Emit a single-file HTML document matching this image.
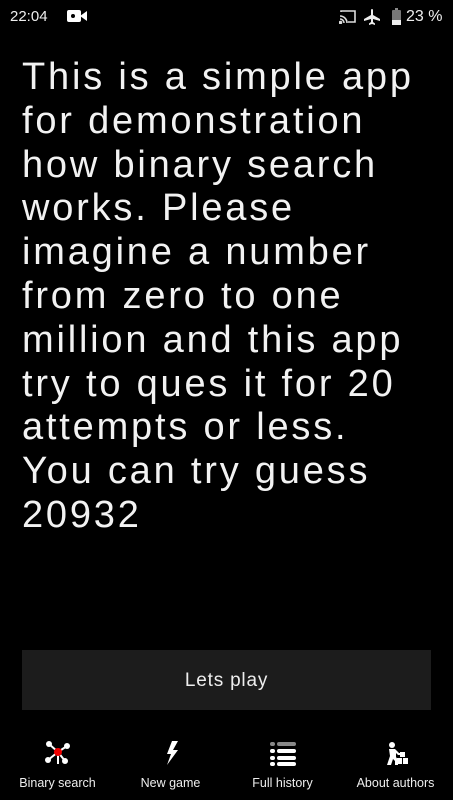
<!DOCTYPE html>
<html><head><meta charset="utf-8"><style>
body{margin:0;width:453px;height:800px;background:#000;color:#fff;font-family:"Liberation Sans",sans-serif;position:relative;overflow:hidden}
.sb{position:absolute;top:0;left:0;right:0;height:34px;font-size:15px;color:#eee}
.main{position:absolute;left:22px;top:56px;width:440px;font-size:38px;line-height:43.8px;color:#f2f2f2;letter-spacing:2.8px;white-space:nowrap}
.btn{position:absolute;left:22px;top:650px;width:409px;height:60px;background:#1c1c1c;color:#eee;font-size:19px;text-align:center;line-height:62px;letter-spacing:0.8px}
.nav{position:absolute;top:740px;left:0;width:453px;height:60px}
.it{position:absolute;top:0;width:113px;text-align:center}
.it svg{display:block;margin:0 auto}
.lb{position:absolute;top:36px;left:0;right:0;font-size:12.5px;color:#eee;text-align:center}
</style></head><body>
<div class="sb">
<span style="position:absolute;left:10px;top:8px">22:04</span>
<svg style="position:absolute;left:67px;top:10px" width="20" height="12"><rect x="0" y="0" width="14" height="12" rx="2" fill="#fff"/><polygon points="13,6 20,1 20,11" fill="#fff"/><circle cx="6" cy="6" r="2" fill="#000"/></svg>
<svg style="position:absolute;left:339px;top:9px" width="18" height="15" fill="none" stroke="#ddd" stroke-width="1.6"><path d="M2 3V2h14v11H9"/><path d="M1 7a7 7 0 0 1 7 7M1 10a4 4 0 0 1 4 4"/><circle cx="1.5" cy="13.5" r="1" fill="#ddd"/></svg>
<svg style="position:absolute;left:364px;top:8px" width="17" height="17" fill="#eee"><path d="M8 1c1 0 1 1 1 2v4l7 4v2l-7-2v3l2 1.5V17l-3-1-3 1v-1.5L7 14v-3l-7 2v-2l7-4V3c0-1 0-2 1-2z"/></svg>
<svg style="position:absolute;left:392px;top:8px" width="9" height="17"><rect x="3" y="0" width="3" height="2" fill="#888"/><rect x="0" y="2" width="9" height="15" rx="1" fill="#777"/><rect x="0" y="12" width="9" height="5" fill="#eee"/></svg>
<span style="position:absolute;left:406px;top:8px;font-size:16px">23 %</span>
</div>
<div class="main">This is a simple app<br>for demonstration<br>how binary search<br>works. Please<br>imagine a number<br>from zero to one<br>million and this app<br>try to ques it for 20<br>attempts or less.<br>You can try guess<br>20932</div>
<div class="btn">Lets play</div>
<div class="nav">
<div class="it" style="left:1px"><svg width="26" height="26" viewBox="0 0 26 26"><g stroke="#fff" stroke-width="2"><line x1="13" y1="12" x2="4" y2="4"/><line x1="13" y1="12" x2="22" y2="6"/><line x1="13" y1="12" x2="3" y2="20"/><line x1="13" y1="12" x2="20" y2="21"/><line x1="13" y1="12" x2="13" y2="24"/></g><circle cx="4" cy="4" r="3" fill="#fff"/><circle cx="22" cy="6" r="3" fill="#fff"/><circle cx="3" cy="20" r="3" fill="#fff"/><circle cx="20" cy="21" r="3" fill="#fff"/><circle cx="13" cy="12" r="4" fill="#e00"/></svg><div class="lb">Binary search</div></div>
<div class="it" style="left:114px"><svg width="26" height="26" viewBox="0 0 26 26"><path d="M14 1h6l-5 9h5L9 25l4-11H9z" fill="#fff"/></svg><div class="lb">New game</div></div>
<div class="it" style="left:226px"><svg width="26" height="26" viewBox="0 0 26 26" fill="#fff"><rect x="0" y="2" width="5" height="4" rx="2" fill="#888"/><rect x="7" y="2" width="19" height="4" rx="2" fill="#888"/><rect x="0" y="9" width="5" height="4" rx="2"/><rect x="7" y="9" width="19" height="4" rx="2"/><rect x="0" y="16" width="5" height="4" rx="2"/><rect x="7" y="16" width="19" height="4" rx="2"/><rect x="0" y="22" width="5" height="4" rx="2"/><rect x="7" y="22" width="19" height="4" rx="2"/></svg><div class="lb">Full history</div></div>
<div class="it" style="left:339px"><svg width="26" height="26" viewBox="0 0 26 26" fill="#fff"><circle cx="9" cy="5" r="3"/><path d="M6 9h6l4 4h4v2h-5l-2-2v4l2 3v5h-3v-4l-2-2-2 6H4l3-9z"/><rect x="14" y="18" width="5" height="6"/><rect x="20" y="18" width="5" height="6"/><rect x="17" y="12" width="5" height="5"/></svg><div class="lb">About authors</div></div>
</div>
</body></html>
